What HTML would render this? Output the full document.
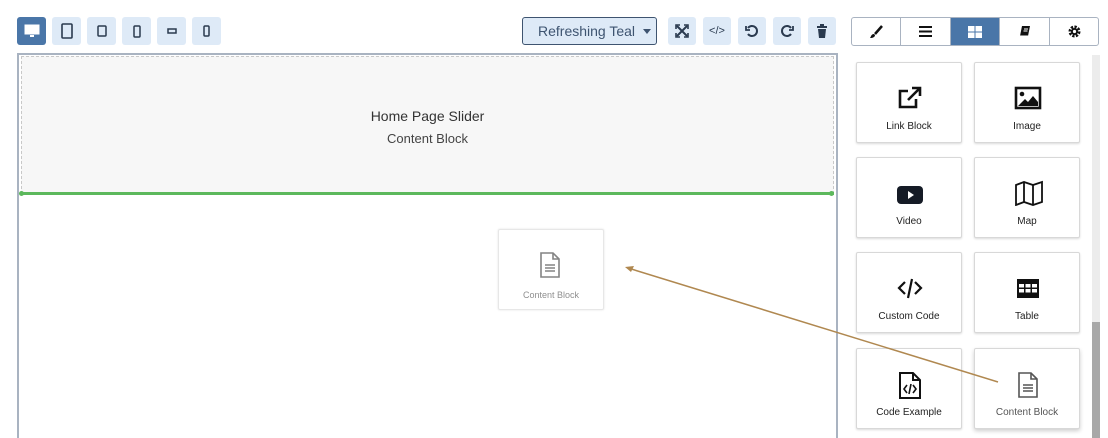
<!DOCTYPE html><html style="overflow:hidden;height:438px"><head><style>
body{margin:0;width:1108px;height:438px;overflow:hidden;background:#fff;font-family:"Liberation Sans",sans-serif;position:relative}
.a{position:absolute;box-sizing:border-box}
.db{top:17px;width:29px;height:28px;background:#deeaf7;border-radius:3px;display:flex;align-items:center;justify-content:center}
.ib{top:17px;width:28px;height:28px;background:#deeaf7;border-radius:3px;display:flex;align-items:center;justify-content:center}
.tab{height:27px;width:49px;border-right:1px solid #a9b3c1;display:flex;align-items:center;justify-content:center;box-sizing:border-box}
.blk{width:106px;height:81px;border:1px solid #d8d8d8;border-radius:2px;box-shadow:0 1px 2px rgba(0,0,0,.15);background:#fff;text-align:center;font-size:10px;color:#222}
.blk svg{position:absolute;left:39px;top:22px}
.blk span{position:absolute;left:0;right:0;top:58px}
</style></head><body>
<div class="a db" style="left:17px;background:#4a76a8"><svg width="16" height="14"><rect x="1" y="1" width="14" height="9" fill="#fff" stroke="#fff"/><rect x="6" y="11" width="4" height="2" fill="#fff"/></svg></div>
<div class="a db" style="left:52px"><svg width="12" height="16"><rect x="1" y="1" width="10" height="14" rx="1" fill="none" stroke="#2a3a4f" stroke-width="1.6"/></svg></div>
<div class="a db" style="left:87px"><svg width="10" height="12"><rect x="1" y="1" width="8" height="10" rx="1" fill="none" stroke="#2a3a4f" stroke-width="1.5"/></svg></div>
<div class="a db" style="left:122px"><svg width="8" height="13"><rect x="1" y="1" width="6" height="11" rx="1" fill="none" stroke="#2a3a4f" stroke-width="1.5"/></svg></div>
<div class="a db" style="left:157px"><svg width="10" height="6"><rect x="1" y="1" width="8" height="4" fill="none" stroke="#2a3a4f" stroke-width="1.5"/></svg></div>
<div class="a db" style="left:192px"><svg width="7" height="12"><rect x="1" y="1" width="5" height="10" rx="1" fill="none" stroke="#2a3a4f" stroke-width="1.5"/></svg></div>

<div class="a" style="left:522px;top:17px;width:135px;height:28px;border:1px solid #3e5470;border-radius:3px;background:#deeaf7;font-size:14px;color:#3e5470;line-height:26px;padding-left:15px">Refreshing Teal <span style="display:inline-block;border:4px solid transparent;border-top:5px solid #3e5470;vertical-align:-2px;margin-left:4px"></span></div>
<div class="a ib" style="left:668px"><svg width="14" height="14" stroke="#2a3a4f" stroke-width="2" fill="none"><path d="M2 2l10 10M12 2L2 12"/><path d="M1 5V1h4M9 1h4v4M13 9v4H9M5 13H1V9" stroke-width="1.6"/></svg></div>
<div class="a ib" style="left:703px;font-size:11px;color:#2a3a4f">&lt;/&gt;</div>
<div class="a ib" style="left:738px"><svg width="14" height="14" fill="none" stroke="#2a3a4f" stroke-width="2"><path d="M3 4A5 5 0 1 1 3 10"/><path d="M1 2v4h4" stroke-width="1.8"/></svg></div>
<div class="a ib" style="left:773px"><svg width="14" height="14" fill="none" stroke="#2a3a4f" stroke-width="2"><path d="M11 4A5 5 0 1 0 11 10"/><path d="M13 2v4H9" stroke-width="1.8"/></svg></div>
<div class="a ib" style="left:808px"><svg width="12" height="14" fill="#2a3a4f"><rect x="1" y="2" width="10" height="2"/><rect x="4" y="0" width="4" height="2"/><path d="M2 5h8l-1 9H3z"/></svg></div>

<div class="a" style="left:851px;top:17px;width:248px;height:29px;border:1px solid #a9b3c1;border-radius:3px;overflow:hidden;display:flex">
<div class="tab"><svg width="14" height="14"><path d="M13 1L6 9" stroke="#111" stroke-width="2.5"/><path d="M5 9c-3 0-3 3-4 4 3 0 5-1 5-3z" fill="#111"/></svg></div>
<div class="tab" style="width:50px"><svg width="13" height="11" fill="#111"><rect y="0" width="13" height="2"/><rect y="4.5" width="13" height="2"/><rect y="9" width="13" height="2"/></svg></div>
<div class="tab" style="background:#4a76a8"><svg width="14" height="12" fill="#fff"><rect width="6.5" height="5.5"/><rect x="7.5" width="6.5" height="5.5"/><rect y="6.5" width="6.5" height="5.5"/><rect x="7.5" y="6.5" width="6.5" height="5.5"/></svg></div>
<div class="tab" style="width:50px"><svg width="12" height="13"><path d="M3 1h8l-2 10H1z" fill="#111"/><path d="M1 11h8" stroke="#fff"/><path d="M5 4h4M4.5 6h4" stroke="#fff"/></svg></div>
<div class="tab" style="border:none;flex:1"><svg width="13" height="13"><circle cx="6.5" cy="6.5" r="4.5" fill="none" stroke="#111" stroke-width="3" stroke-dasharray="2.2 1.3"/><circle cx="6.5" cy="6.5" r="3.5" fill="#111"/><circle cx="6.5" cy="6.5" r="1.6" fill="#fff"/></svg></div>
</div>

<div class="a" style="left:17px;top:53px;width:821px;height:385px;border:2px solid #a9b3c1;border-bottom:none;background:#fff"></div>
<div class="a" style="left:21px;top:56px;width:813px;height:138px;border:1px dashed #c8c8c8;background:#f7f7f7;text-align:center;color:#333">
<div style="position:absolute;top:51px;left:0;right:0;font-size:14px;color:#333">Home Page Slider</div>
<div style="position:absolute;top:74px;left:0;right:0;font-size:13px;color:#444">Content Block</div></div>
<div class="a" style="left:21px;top:192px;width:813px;height:3px;background:#5cb85c"></div>
<div class="a" style="left:19px;top:191px;width:5px;height:5px;background:#5cb85c;border-radius:50%"></div>
<div class="a" style="left:829px;top:191px;width:5px;height:5px;background:#5cb85c;border-radius:50%"></div>

<div class="a blk" style="left:498px;top:229px;opacity:.6;box-shadow:0 0 2px rgba(0,0,0,.2)"><svg width="24" height="26" fill="none" stroke="#333" stroke-width="1.6"><path d="M3 1h12l6 6v18H3z"/><path d="M15 1v6h6M7 13h10M7 16h10M7 19h10"/></svg><span style="top:60px;color:#444;font-size:9px">Content Block</span></div>

<div class="a blk" style="left:856px;top:62px"><svg width="28" height="26" fill="none" stroke="#111" stroke-width="2.6"><path d="M12 6H4v16h16v-8"/><path d="M12 15L24 3M16 3h8v8"/></svg><span>Link Block</span></div>
<div class="a blk" style="left:974px;top:62px"><svg width="28" height="26"><rect x="2" y="3" width="24" height="20" fill="none" stroke="#111" stroke-width="2.6"/><circle cx="8" cy="9" r="2.3" fill="#111"/><path d="M4 21l7-7 3 3 5-6 5 6v4z" fill="#111"/></svg><span>Image</span></div>
<div class="a blk" style="left:856px;top:157px"><svg width="28" height="26"><rect x="1" y="6" width="26" height="18" rx="4" fill="#151b26"/><path d="M12 11v8l6-4z" fill="#fff"/></svg><span>Video</span></div>
<div class="a blk" style="left:974px;top:157px"><svg width="30" height="26" fill="none" stroke="#111" stroke-width="1.8"><path d="M2 5l8-3 9 3 9-3v20l-9 3-9-3-8 3z"/><path d="M10 2v20M19 5v20"/></svg><span>Map</span></div>
<div class="a blk" style="left:856px;top:252px"><svg width="28" height="26" fill="none" stroke="#111" stroke-width="2.2"><path d="M9 7l-6 6 6 6M19 7l6 6-6 6M16 4l-4 19"/></svg><span>Custom Code</span></div>
<div class="a blk" style="left:974px;top:252px"><svg width="28" height="26"><rect x="3" y="4" width="22" height="19" fill="#111"/><g fill="#fff"><rect x="5" y="9" width="5" height="3.5"/><rect x="11.5" y="9" width="5" height="3.5"/><rect x="18" y="9" width="5" height="3.5"/><rect x="5" y="14" width="5" height="3.5"/><rect x="11.5" y="14" width="5" height="3.5"/><rect x="18" y="14" width="5" height="3.5"/></g></svg><span>Table</span></div>
<div class="a blk" style="left:856px;top:348px"><svg width="28" height="28" fill="none" stroke="#111" stroke-width="2"><path d="M4 2h13l7 7v18H4z"/><path d="M17 2v7h7"/><path d="M11 14l-3 4 3 4M17 14l3 4-3 4M15 13l-2 10" stroke-width="1.6"/></svg><span>Code Example</span></div>
<div class="a blk" style="left:974px;top:348px;box-shadow:0 2px 4px rgba(0,0,0,.2)"><svg width="28" height="28" fill="none" stroke="#555" stroke-width="1.6"><path d="M5 2h12l6 6v18H5z"/><path d="M17 2v6h6M9 14h10M9 17h10M9 20h10"/></svg><span style="color:#555">Content Block</span></div>

<div class="a" style="left:1092px;top:55px;width:8px;height:383px;background:#ececec"></div>
<div class="a" style="left:1092px;top:322px;width:8px;height:116px;background:#a8a8a8"></div>

<svg class="a" style="left:0;top:0" width="1108" height="438"><line x1="998" y1="382" x2="628" y2="268" stroke="#b08850" stroke-width="1.5"/><path d="M625 267l9-1-3 6z" fill="#b08850"/></svg>
</body></html>
